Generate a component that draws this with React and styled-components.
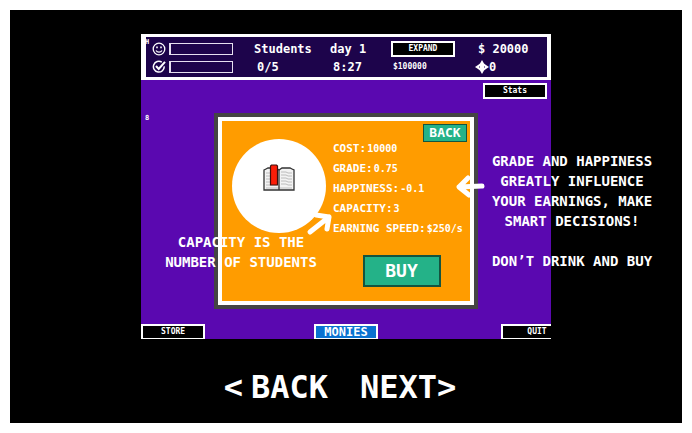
import React from "react";
import styled, { createGlobalStyle } from "styled-components";

const GlobalStyle = createGlobalStyle`
  *, *::before, *::after { box-sizing: border-box; }
  body {
    margin: 0;
    background: #ffffff;
    color: #ffffff;
    font-family: "DejaVu Sans Mono", "Liberation Mono", monospace;
    font-weight: 700;
  }
  button { font: inherit; color: inherit; cursor: pointer; margin: 0; }
`;

const Page = styled.div`
  display: flex;
  min-height: 100vh;
  padding: 10px;
`;

const Stage = styled.main`
  flex: 1;
  display: flex;
  flex-direction: column;
  align-items: center;
  padding: 24px 0 12px;
  background: #000000;
  overflow: hidden;
`;

const GameArea = styled.div`
  position: relative;
  display: flex;
  justify-content: center;
  width: 100%;
`;

const Game = styled.section`
  position: relative;
  display: flex;
  flex-direction: column;
  width: 61%;
  min-width: 400px;
  background: #5a08b0;
`;

const Hud = styled.header`
  display: grid;
  grid-template-columns: 102fr 76fr 61fr 87fr 69fr;
  align-items: center;
  height: 46px;
  padding-top: 2px;
  padding-left: 6px;
  border: solid #ffffff;
  border-width: 3px 4px 3px 5px;
  background: #1d044b;
`;

const HudColumn = styled.div`
  display: grid;
  grid-template-rows: 18px 18px;
  align-items: center;
  font-size: 12px;
  line-height: 18px;
  white-space: nowrap;
`;

const Indent = styled.span`
  padding-left: 3px;
`;

const StatusRow = styled.div`
  display: flex;
  align-items: center;
  gap: 3px;
`;

const Meter = styled.div`
  width: 64px;
  height: 12px;
  border: 1px solid #e6e0f0;
  border-left-width: 2px;
`;

const Icon = styled.svg`
  display: block;
  flex: none;
  fill: none;
  stroke: #ffffff;
`;

const SmallButton = styled.button`
  width: 64px;
  height: 16px;
  padding: 0;
  border: 2px solid #ffffff;
  background: #000000;
  font-size: 8px;
  line-height: 12px;
`;

const SmallText = styled.span`
  padding-left: 2px;
  font-size: 8px;
`;

const Energy = styled.span`
  display: flex;
  align-items: center;
  margin-left: -3px;
`;

const Toolbar = styled.div`
  display: flex;
  justify-content: flex-end;
  padding: 3px 4px 14px;
`;

const Marker = styled.span`
  position: absolute;
  left: 4px;
  top: ${(p) => p.$top}px;
  font-size: 7px;
  line-height: 8px;
`;

const Dialog = styled.article`
  position: relative;
  display: grid;
  grid-template-columns: 94px 1fr;
  column-gap: 7px;
  align-self: center;
  width: 256px;
  margin: 4px 0;
  padding: 18px 0 14px 10px;
  border: 4px solid #ffffff;
  outline: 4px solid #444444;
  background: #ff9c00;
`;

const Portrait = styled.div`
  display: flex;
  align-items: center;
  justify-content: center;
  width: 94px;
  height: 94px;
  padding-bottom: 16px;
  border-radius: 50%;
  background: #ffffff;
`;

const Details = styled.div`
  display: flex;
  flex-direction: column;
  align-items: center;
  gap: 16px;
`;

const StatList = styled.dl`
  width: 100%;
  margin: 0;
`;

const StatRow = styled.div`
  display: flex;
  gap: 1px;
  line-height: 20px;
  white-space: nowrap;
`;

const StatName = styled.dt`
  font-size: 11px;
`;

const StatValue = styled.dd`
  margin: 0;
  font-size: 10px;
`;

const GreenButton = styled.button`
  padding: 0;
  border: 2px solid #14543f;
  background: #24b288;
`;

const CloseButton = styled(GreenButton)`
  position: absolute;
  top: 3px;
  right: 3px;
  width: 44px;
  height: 18px;
  border-width: 1px;
  font-size: 13px;
  line-height: 16px;
`;

const BuyButton = styled(GreenButton)`
  width: 78px;
  height: 32px;
  font-size: 18px;
  line-height: 28px;
`;

const Tabs = styled.footer`
  display: grid;
  grid-template-columns: 1fr auto 1fr;
  margin-top: 15px;
`;

const Tab = styled.button`
  width: 64px;
  height: 15px;
  padding: 0;
  border: 2px solid #ffffff;
  border-bottom-width: 1px;
  background: ${(p) => (p.$active ? "#0a72d0" : "#000000")};
  font-size: ${(p) => (p.$active ? 12 : 8)}px;
  line-height: 12px;
`;

const QuitTab = styled(Tab)`
  justify-self: end;
  width: 50px;
  border-right: 0;
  padding-left: 20px;
`;

const Note = styled.p`
  position: absolute;
  top: ${(p) => p.$top}px;
  left: calc(50% + ${(p) => p.$fromCentre}px);
  width: 170px;
  margin: 0;
  font-size: 14px;
  line-height: 20px;
  text-align: center;
  white-space: pre-line;
`;

const Arrow = styled.svg`
  position: absolute;
  top: ${(p) => p.$top}px;
  left: calc(50% + ${(p) => p.$fromCentre}px);
  fill: none;
  stroke: #ffffff;
  stroke-width: 5;
  stroke-linecap: round;
  stroke-linejoin: round;
`;

const Pager = styled.nav`
  display: flex;
  gap: 32px;
  margin-top: 28px;
  padding-right: 12px;
`;

const PagerButton = styled.button`
  display: flex;
  gap: ${(p) => p.$gap}px;
  padding: 0;
  border: 0;
  background: none;
  font-size: 32px;
  line-height: 40px;
`;

const stats = [
  ["COST:", "10000"],
  ["GRADE:", "0.75"],
  ["HAPPINESS:", "-0.1"],
  ["CAPACITY:", "3"],
  ["EARNING SPEED:", "$250/s"],
];

function Smile() {
  return (
    <Icon width="14" height="14" viewBox="0 0 14 14" strokeWidth="1.3" aria-hidden="true">
      <circle cx="7" cy="7" r="5.8" />
      <path d="M4 8.5c1.4 2.2 4.6 2.2 6 0" />
      <path d="M5 4.6v1.6M9 4.6v1.6" strokeWidth="1.6" />
    </Icon>
  );
}

function Check() {
  return (
    <Icon width="14" height="14" viewBox="0 0 14 14" aria-hidden="true">
      <path d="M9.8 2.2A5.4 5.4 0 1 0 12.2 6.4" strokeWidth="1.5" />
      <path d="M4 6l2.7 3L13 1.8" strokeWidth="2" />
    </Icon>
  );
}

function Compass() {
  return (
    <Icon width="14" height="14" viewBox="0 0 14 14" aria-hidden="true">
      <path
        d="M7 0L9 3.5L11 5L14 7L11 9L9 10.5L7 14L5 10.5L3 9L0 7L3 5L5 3.5Z"
        fill="#ffffff"
        stroke="none"
      />
      <path d="M4.500 6v2M9.500 6v2" stroke="#8d80b0" />
    </Icon>
  );
}

function Book() {
  return (
    <svg width="32" height="28" viewBox="0 0 32 28" aria-hidden="true">
      <path d="M1 6l2-1 2-1h8l3 2 3-2h8l2 1 2 1v20H1z" fill="#f3f3f3" stroke="#333" strokeWidth="1.3" />
      <path
        d="M3 9h11M3 12h11M3 15h11M3 18h11M3 21h11M18 8h5l2 1h4M18 11h5l2 1h4M18 14h5l2 1h4M18 17h5l2 1h4M18 20h5l2 1h4M3 24h26"
        fill="none"
        stroke="#bcbcbc"
      />
      <path d="M16 6v20" stroke="#333" strokeWidth="1.3" />
      <path d="M8.5 1h5l1 1v19h-7V2z" fill="#fb1e08" stroke="#40100c" strokeWidth="1.2" />
    </svg>
  );
}

export default function App() {
  return (
    <>
      <GlobalStyle />
      <Page>
        <Stage>
          <GameArea>
            <Game>
              <Hud>
                <HudColumn>
                  <StatusRow>
                    <Smile />
                    <Meter role="img" aria-label="Happiness" />
                  </StatusRow>
                  <StatusRow>
                    <Check />
                    <Meter role="img" aria-label="Grade" />
                  </StatusRow>
                </HudColumn>
                <HudColumn>
                  <span>Students</span>
                  <Indent>0/5</Indent>
                </HudColumn>
                <HudColumn>
                  <span>day 1</span>
                  <Indent>8:27</Indent>
                </HudColumn>
                <HudColumn>
                  <SmallButton type="button">EXPAND</SmallButton>
                  <SmallText>$100000</SmallText>
                </HudColumn>
                <HudColumn>
                  <span>$ 20000</span>
                  <Energy>
                    <Compass />0
                  </Energy>
                </HudColumn>
              </Hud>
              <Marker $top={4}>H</Marker>
              <Marker $top={80}>8</Marker>
              <Toolbar>
                <SmallButton type="button">Stats</SmallButton>
              </Toolbar>
              <Dialog>
                <CloseButton type="button">BACK</CloseButton>
                <Portrait>
                  <Book />
                </Portrait>
                <Details>
                  <StatList>
                    {stats.map(([name, value]) => (
                      <StatRow key={name}>
                        <StatName>{name}</StatName>
                        <StatValue>{value}</StatValue>
                      </StatRow>
                    ))}
                  </StatList>
                  <BuyButton type="button">BUY</BuyButton>
                </Details>
              </Dialog>
              <Tabs>
                <Tab type="button">STORE</Tab>
                <Tab type="button" $active>MONIES</Tab>
                <QuitTab type="button">QUIT</QuitTab>
              </Tabs>
            </Game>
            <Note $top={198} $fromCentre={-190}>{"CAPACITY IS THE\nNUMBER OF STUDENTS"}</Note>
            <Note $top={117} $fromCentre={141}>
              {"GRADE AND HAPPINESS\nGREATLY INFLUENCE\nYOUR EARNINGS, MAKE\nSMART DECISIONS!\n\nDON’T DRINK AND BUY"}
            </Note>
            <Arrow $top={138} $fromCentre={109} width="32" height="28" viewBox="0 0 32 28" aria-hidden="true">
              <path d="M27 14L4 15M13 6L4 15L14 23" />
            </Arrow>
            <Arrow $top={176} $fromCentre={-40} width="28" height="26" viewBox="0 0 28 26" aria-hidden="true">
              <path d="M4 22L23 7M10 5L23 7L21 19" />
            </Arrow>
          </GameArea>
          <Pager aria-label="Tutorial pages">
            <PagerButton type="button" $gap={8}>
              <span>&lt;</span>
              <span>BACK</span>
            </PagerButton>
            <PagerButton type="button" $gap={0}>
              <span>NEXT</span>
              <span>&gt;</span>
            </PagerButton>
          </Pager>
        </Stage>
      </Page>
    </>
  );
}
